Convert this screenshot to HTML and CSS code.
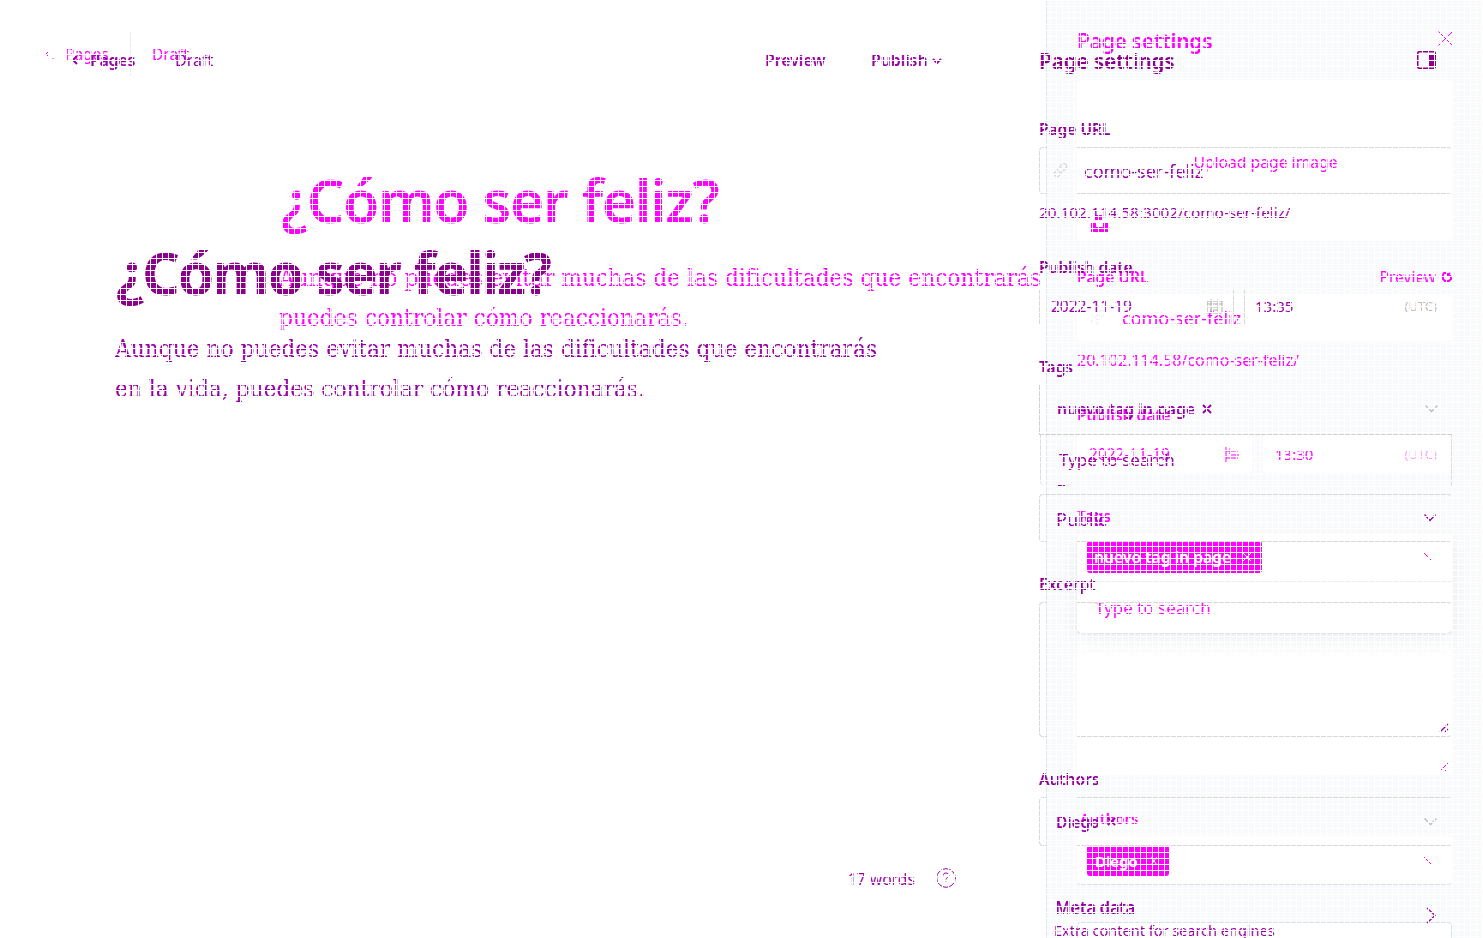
FILE: index.html
```html
<!DOCTYPE html>
<html lang="es">
<head>
<meta charset="utf-8">
<title>Page settings</title>
<link rel="stylesheet" href="styles.css">
</head>
<body>
<main class="stage">
  <section class="layer first">
    <div class="editor">
      <header class="bar">
        <svg class="back" width="8" height="12" viewBox="0 0 8 12"><path d="M7 0v1M2 4L0 6l2 2M7 10v1"/></svg>
        <span class="pages">Pages</span><i class="rule"></i><span>Draft</span>
      </header>
      <h1>¿Cómo ser feliz?</h1>
      <p>Aunque no puedes evitar muchas de las dificultades que encontrarás<br>puedes controlar cómo reaccionarás.</p>
    </div>
    <aside class="panel">
      <header class="head"><h2>Page settings</h2>
        <svg width="15" height="15" viewBox="0 0 15 15"><path d="M.5.5l14 14M14.5.5l-14 14"/></svg>
      </header>
      <div class="upload"><span class="button">Upload page image</span>
        <svg class="mark" width="17" height="21" viewBox="0 0 17 21"><path d="M4 3h7v5H4zM0 10h5v5h7v-5h5v10H0z"/></svg>
      </div>
      <div class="label split"><span class="url-label">Page URL</span><span class="preview">Preview <svg width="10" height="10" viewBox="0 0 10 10"><path d="M5 1H2L1 3v4l2 2h4l2-2V5M5 4l3-3M6 1v3h3"/></svg></span></div>
      <div class="box url"><svg class="link" width="18" height="18" viewBox="0 0 18 18"><path d="M8 5l3-3c2-2 6 2 4 4l-4 4c-1 1-3 1-4 0M10 12l-3 3c-2 2-6-2-4-4l4-4c1-1 3-1 4 0"/></svg><span class="slug">como-ser-feliz</span></div>
      <div class="help">20.102.114.58/como-ser-feliz/</div>
      <div class="label date-label"><span>Publish date</span></div>
      <div class="when"><div class="box date"><span>2022-11-19</span><svg width="15" height="15" viewBox="0 0 15 15"><path d="M1 0v15M1 4h12M5 8h9M1 11h12M5 1v6"/></svg></div><div class="box time"><span>13:30</span><span class="utc">(UTC)</span></div></div>
      <div class="label tags-label"><span>Tags</span></div>
      <div class="menu"><div class="picked"><span class="chip">nuevo tag in page <svg width="10" height="10" viewBox="0 0 10 10"><path d="M1 1l8 8M9 1L1 9"/></svg></span><svg width="8" height="8" viewBox="0 0 8 8"><path d="M0 0l7 7"/></svg></div><div class="search">Type to search</div></div>
      <div class="box area"><svg class="grip" width="10" height="10" viewBox="0 0 10 10"><path d="M1 9l8-8M6 9l3-3"/></svg></div>
      <div class="label authors-label"><span>Authors</span></div>
      <div class="box picked people"><span class="chip">Diego <svg width="8" height="10" viewBox="0 0 8 10"><path d="M1 1l6 8M7 1L1 9"/></svg></span><svg width="8" height="8" viewBox="0 0 8 8"><path d="M0 0l7 7"/></svg></div>
      <div class="box tail"></div>
    </aside>
  </section>
  <section class="layer second">
    <div class="editor">
      <header class="bar">
        <svg class="back" width="6" height="10" viewBox="0 0 6 10"><path d="M5 1L1 5l4 4"/></svg>
        <span class="pages">Pages</span><span class="draft">Draft</span>
        <span class="see">Preview</span><span class="publish">Publish</span><svg class="down" width="10" height="6" viewBox="0 0 10 6"><path d="M1 1l4 4 4-4"/></svg>
      </header>
      <h1>¿Cómo ser feliz?</h1>
      <p>Aunque no puedes evitar muchas de las dificultades que encontrarás<br>en la vida, puedes controlar cómo reaccionarás.</p>
      <footer class="count"><span>17 words</span><svg width="20" height="20" viewBox="0 0 20 20"><circle cx="10" cy="10" r="9.3"/><path d="M7.2 7.5c0-3.5 5.6-3.2 5.6 0 0 2-2.8 2-2.8 4M10 13.5V15"/></svg></footer>
    </div>
    <aside class="panel">
      <header class="head"><h2>Page settings</h2>
        <svg width="19" height="18" viewBox="0 0 19 18"><rect x=".7" y=".7" width="17.6" height="16.6" rx="2"/><path class="solid" d="M12 3h6v12h-6z"/></svg>
      </header>
      <div class="label"><span class="url-label">Page URL</span></div>
      <div class="box url gap"><svg class="link" width="17" height="17" viewBox="0 0 18 18"><path d="M8 5l3-3c2-2 6 2 4 4l-4 4c-1 1-3 1-4 0M10 12l-3 3c-2 2-6-2-4-4l4-4c1-1 3-1 4 0"/></svg><span class="slug">como-ser-feliz</span></div>
      <div class="help">20.102.114.58:3002/como-ser-feliz/</div>
      <div class="label date-label"><span>Publish date</span></div>
      <div class="when"><div class="date"><span>2022-11-19</span><svg width="17" height="15" viewBox="0 0 17 15"><path d="M1 2h15v12H1zM1 5h15M4 8h9M4 11h9M5 0v14M12 0v14"/></svg></div><div class="time"><span>13:35</span><span class="utc">(UTC)</span></div></div>
      <div class="label tags-label"><span>Tags</span></div>
      <div class="combo tags"><span class="name">nuevo tag in page</span><svg class="cross" width="10" height="10" viewBox="0 0 10 10"><path d="M1 1l8 8M9 1L1 9"/></svg><svg class="grey" width="13" height="8" viewBox="0 0 13 8"><path d="M.5.5l6 6 6-6"/></svg></div>
      <div class="search">Type to search<i class="caret"></i></div>
      <div class="box combo access gap"><span>Public</span><svg width="12" height="8" viewBox="0 0 12 8"><path d="M.5.5l5.5 6 5.5-6"/></svg></div>
      <div class="label excerpt-label"><span>Excerpt</span></div>
      <div class="box area gap"><svg class="grip" width="10" height="10" viewBox="0 0 10 10"><path d="M1 9l8-8M6 9l3-3"/></svg></div>
      <div class="label authors-label"><span>Authors</span></div>
      <div class="box combo people gap"><span class="name">Diego</span><svg class="cross" width="9" height="9" viewBox="0 0 10 10"><path d="M1 1l8 8M9 1L1 9"/></svg><svg class="grey" width="13" height="8" viewBox="0 0 13 8"><path d="M.5.5l6 6 6-6"/></svg></div>
      <div class="meta"><div><strong>Meta data</strong><small>Extra content for search engines</small></div><svg width="10" height="17" viewBox="0 0 10 17"><path d="M1 1l8 7.5L1 16"/></svg></div>
    </aside>
  </section>
  <div class="mesh"></div>
</main>
</body>
</html>
```
FILE: styles.css
```css
* { box-sizing: border-box; }
body { margin: 0; overflow: hidden; background: #fff; font: 15px/20px "Noto Sans", sans-serif; white-space: nowrap; }
svg { display: block; flex: none; fill: none; stroke: currentColor; stroke-width: 1; }
h1, h2, p { margin: 0; }
.stage { display: grid; width: 1483px; height: 938px; overflow: hidden; }
.layer, .mesh { grid-area: 1 / 1; min-width: 0; height: 938px; }
.layer { display: flex; overflow: hidden; }
.mesh { z-index: 3; background: repeating-linear-gradient(90deg, #fff 0 1px, transparent 1px 6px), repeating-linear-gradient(#fff 0 1px, transparent 1px 6px); }
.editor, .panel { flex: none; height: 938px; }
.bar { display: flex; align-items: center; }
h1 { font-size: 59px; line-height: 72px; font-weight: 700; letter-spacing: -2.25px; }
p { font-family: "DejaVu Serif Condensed", "DejaVu Serif", serif; font-size: 24.2px; line-height: 40px; }
h2 { font-size: 21px; line-height: 30px; font-weight: 600; letter-spacing: -.25px; }
.split, .picked, .combo, .date, .time, .head, .url { display: flex; align-items: center; justify-content: space-between; }
.label { height: 20px; font-size: 15.5px; font-weight: 600; }
.when { display: flex; }
.slug, .access { font-size: 18px; }
.search { font-size: 17px; }

.first { color: #f0f; }
.first .editor { width: 1046px; padding: 0 0 0 46px; overflow: hidden; }
.first .bar { height: 108px; font-size: 15.5px; }
.first .pages { width: 65px; margin-left: 11px; }
.first .rule { width: 1px; height: 44px; margin-right: 21px; background: #e4ecf4; }
.first h1 { margin: 56px 0 0 235px; font-weight: 600; letter-spacing: -1.4px; }
.first p { margin: 22px 0 0 233px; }
.first .panel { width: 437px; padding: 0 30px; border-left: 1px solid #dfe8f1; background: #f8fafc; }
.first .head { height: 80px; padding-top: 2px; }
.first .head svg { margin-bottom: 6px; }
.first .box { border-radius: 4px; background: #fff; width: 375px; }
.upload { display: flex; flex-direction: column; align-items: center; width: 375px; height: 161px; padding-top: 59px; border-radius: 5px; background: #fff; }
.button { width: 176px; height: 43px; padding-left: 2px; border-radius: 6px; line-height: 46px; text-align: center; font-size: 15.7px; }
.mark { align-self: flex-start; margin: 30px 0 0 14px; fill: currentColor; stroke: none; }
.first .split { margin-top: 26px; width: 375px; }
.preview { display: flex; align-items: center; gap: 6px; font-weight: 400; font-size: 15.5px; }
.preview svg { stroke-width: 2; }
.first .url { height: 46px; margin-top: 8px; padding-left: 12px; justify-content: flex-start; }
.link { color: #d4d4d4; }
.first .link { color: #e6e9ec; }
.first .slug { margin-left: 15px; }
.first .help { margin-top: 9px; font-size: 16px; }
.first .date-label { margin-top: 35px; }
.first .when { gap: 11px; margin-top: 10px; }
.first .date { width: 175px; height: 38px; padding: 0 12px; font-size: 15.5px; }
.first .time { width: 189px; height: 38px; padding: 0 15px 0 12px; }
.utc { color: #bbb; font-size: 13px; }
.first .utc { color: #f6a5f6; }
.first .tags-label { margin-top: 33px; }
.menu { position: relative; width: 375px; margin-top: 7px; border-radius: 5px; background: #fff; box-shadow: 0 10px 20px #1e324612, 0 1px 2px #1e324618; }
.picked { height: 48px; padding: 0 20px 0 10px; }
.chip { display: flex; align-items: center; justify-content: space-between; width: 175px; height: 32px; padding: 0 10px 0 7px; border-radius: 3px; background: #f0f; color: #fff; font-size: 15.7px; font-weight: 600; }
.menu .search { height: 52px; padding-left: 18px; border-top: 1px solid #edf0f2; line-height: 51px; }
.first .area { display: flex; height: 142px; align-items: flex-end; justify-content: flex-end; padding: 3px; }
.first .authors-label { margin: 33px 0 0 3px; font-size: 15px; }
.first .people { height: 49px; margin-top: 8px; border-bottom: 1px solid #d5e2eb; padding-top: 1px; }
.people .chip { width: 82px; height: 31px; padding: 0 11px 0 8px; font-size: 15px; }
.tail { height: 50px; margin-top: 37px; border: 1px solid #d5e2eb; }

.second { z-index: 2; color: #9800a4; }
.second .editor { display: flex; flex-direction: column; width: 1039px; padding-left: 72px; }
.second .bar { height: 121px; padding-bottom: 2px; font-weight: 500; }
.second svg { stroke-width: 1.3; }
.second .back, .second .down, .second .cross { stroke-width: 2; }
.second .pages { width: 85px; margin-left: 12px; font-size: 16px; font-weight: 600; letter-spacing: -.3px; }
.second .draft { width: 590px; font-size: 16px; font-weight: 400; }
.see { width: 106px; font-size: 15.8px; font-weight: 600; }
.publish { width: 61px; font-size: 15.8px; font-weight: 600; }
.second .down { margin-top: 2px; }
.second h1 { margin: 115px 0 0 44px; color: #8b008b; }
.second p { margin: 21px 0 0 43px; }
.count { display: flex; align-items: center; margin: auto 83px 49px auto; gap: 21px; font-size: 15.7px; }
.count span { padding-top: 2px; }
.count svg { stroke-width: 1; }
.second .panel { width: 413px; }
.second .box { border: 1px solid #d9d9d9; border-right-color: transparent; border-radius: 4px; }
.second .head { height: 120px; padding: 1px 16px 0 0; color: #8b008b; }
.second .head svg { margin-bottom: 2px; stroke-width: 1.6; }
.second .head h2 { padding-top: 1px; }
.solid { fill: currentColor; stroke: none; }
.second .label { line-height: 19px; color: #900098; }
.second .url { height: 47px; margin-top: 7px; padding-left: 12px; justify-content: flex-start; }
.second .slug { margin: 1px 0 0 15px; }
.gap { position: relative; }
.gap::before, .gap::after { content: ""; position: absolute; left: 7px; width: 30px; height: 1px; background: #f8fafc; }
.gap::before { top: -1px; }
.gap::after { bottom: -1px; }
.access::before { display: none; }
.second .help { height: 20px; margin-top: 9px; line-height: 18px; font-size: 15.3px; }
.second .date-label { margin-top: 35px; }
.second .when { margin-top: 12px; gap: 10px; }
.second .date { width: 195px; height: 34px; padding: 0 10px 2px 11px; border: solid #d9d9d9; border-width: 0 1px; font-size: 15.5px; }
.second .time { width: 208px; height: 34px; padding: 0 15px 2px 10px; border-left: 1px solid #d9d9d9; }
.second .when svg { color: #aaa; stroke-width: 1; }
.second .tags-label { margin-top: 34px; }
.second .combo { padding: 0 14px 0 17px; }
.second .combo svg:last-child { margin-left: auto; }
.second .tags { height: 50px; margin-top: 7px; padding-bottom: 1px; border: solid #d0d0d0; border-width: 0 0 1px 1px; }
.name { font-size: 15.8px; font-weight: 600; }
.cross { margin-left: 7px; }
.grey { color: #bbb; }
.second > .panel > .search { position: relative; height: 51px; margin-left: 1px; padding-left: 18px; border-left: 1px solid #ddd; border-right: 1px solid #ddd; border-radius: 0 0 0 5px; line-height: 50px; }
.caret { position: absolute; left: 17px; bottom: 0; width: 7px; height: 1px; background: currentColor; }
.second .access { height: 48px; margin-top: 8px; padding: 0 15px 0 16px; }
.second .access span { padding-top: 1px; }
.second .excerpt-label { margin-top: 33px; }
.second .area { display: flex; height: 135px; margin-top: 7px; align-items: flex-end; justify-content: flex-end; padding: 2px 2px 3px; }
.second .authors-label { margin-top: 33px; }
.second .people { height: 49px; margin-top: 7px; padding-left: 16px; }
.second .people .name { font-size: 15.3px; }
.meta { display: flex; justify-content: space-between; margin-top: 52px; padding: 0 16px 0 16px; }
.meta strong, .meta small { display: block; }
.meta strong { font-size: 17px; font-weight: 600; letter-spacing: -.5px; }
.meta small { margin-left: -1px; font-size: 14.5px; line-height: 24px; }
.meta svg { margin-top: 9px; }
```
